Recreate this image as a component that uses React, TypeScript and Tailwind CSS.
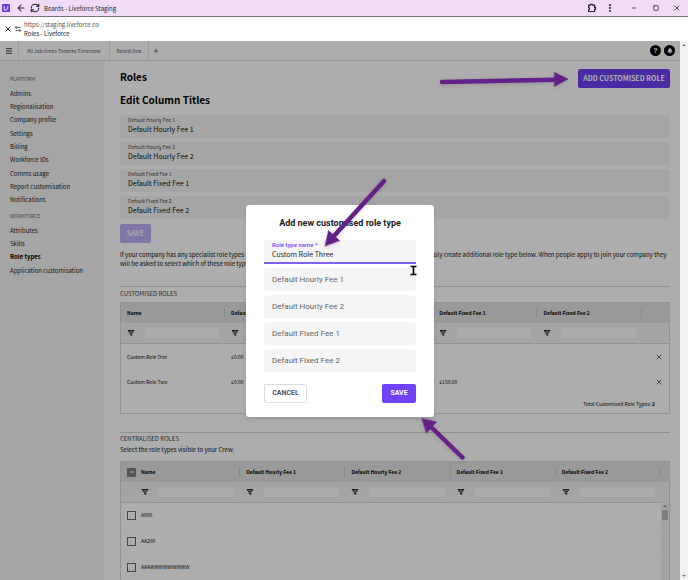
import { ArrowLeft, Bell, EllipsisVertical, Menu, Minus, Plus, RefreshCw, Square, X } from "lucide-react"
import clsx from "clsx"

const fees = ["Default Hourly Fee 1", "Default Hourly Fee 2", "Default Fixed Fee 1", "Default Fixed Fee 2"]

const menu = [
  {
    title: "PLATFORM",
    items: ["Admins", "Regionalisation", "Company profile", "Settings", "Billing", "Workforce IDs", "Comms usage", "Report customisation", "Notifications"],
  },
  { title: "WORKFORCE", items: ["Attributes", "Skills", "Role types", "Application customisation"] },
]

const customRoles = [
  { name: "Custom Role One", values: ["£0.00", "", "", ""] },
  { name: "Custom Role Two", values: ["£0.00", "", "£150.00", ""] },
]

const centralRoles = ["A000", "AA200", "AAAWWWWWWWWW"]

const FilterIcon = () => (
  <svg viewBox="0 0 8 8" className="h-2 w-2 shrink-0" fill="none" stroke="#111" strokeWidth="0.9">
    <path d="M1 1.5h6L4.7 4.3v2.2L3.3 5.6V4.3z" />
    <path d="M2.4 3h3.2" />
  </svg>
)

const FilterCell = ({ label }: { label: string }) => (
  <div className="flex items-center gap-2.5">
    <FilterIcon />
    <input aria-label={`Filter ${label}`} className="mr-1.5 h-2.5 w-full min-w-0 bg-[#fdfdfd]" />
  </div>
)

const TitleBar = () => (
  <header className="flex h-[17px] shrink-0 items-center border-b border-[#77707c] bg-[#eedcf9] pl-0.5 pr-[7px] text-[#222]">
    <svg viewBox="0 0 8 8" className="h-2 w-2">
      <rect width="8" height="8" rx="1" fill="#5f35e8" />
      <path d="M2.2 1.8v4.3h2.3M5.8 1.8v2.6M4.3 5h2" stroke="#fff" strokeWidth="0.9" fill="none" />
    </svg>
    <button aria-label="Back" className="ml-1.5"><ArrowLeft className="h-2.5 w-2.5" strokeWidth={2.5} /></button>
    <button aria-label="Reload" className="ml-1"><RefreshCw className="h-2.5 w-2.5" strokeWidth={2.5} /></button>
    <span className="ml-1 text-[6px] text-[#222]">Boards - Liveforce Staging</span>
    <div className="ml-auto flex items-center">
      <button aria-label="Extensions">
        <svg viewBox="0 0 10 10" className="h-2.5 w-2.5" fill="none" stroke="#222" strokeWidth="1.2" strokeLinejoin="round">
          <path d="M1.6 2.2h2V1.3h2v.9h2v2.2h1v1.8h-1v2.3h-6V6.600c1.200-.2 1.200-2 0-2.200z" />
        </svg>
      </button>
      <button aria-label="More" className="ml-2"><EllipsisVertical className="h-2.5 w-2.5" strokeWidth={3} /></button>
      <button aria-label="Minimise" className="ml-4"><Minus className="h-1.5 w-1.5" strokeWidth={3} /></button>
      <button aria-label="Maximise" className="ml-4"><Square className="h-1.5 w-1.5" strokeWidth={3} /></button>
      <button aria-label="Close" className="ml-3.5"><X className="h-2 w-2" strokeWidth={2.5} /></button>
    </div>
  </header>
)

const AddressBar = () => (
  <div className="flex h-6 shrink-0 items-center bg-white pl-1 text-[6px] leading-[9px]">
    <button aria-label="Close page"><X className="h-2 w-2" strokeWidth={2.5} /></button>
    <svg viewBox="0 0 8 8" className="ml-0.5 h-2 w-2" fill="none" stroke="#333" strokeWidth="0.8">
      <path d="M1 2.500h1.500M4 2.500h2.500M1.500 5.500h2.500M5.500 5.500H7" />
      <circle cx="2.500" cy="2.500" r="0.800" />
      <circle cx="5.500" cy="5.500" r="0.800" />
    </svg>
    <div className="ml-0.5">
      <p className="text-[#555]">https://staging.liveforce.co</p>
      <p className="text-[#222]">Roles - Liveforce</p>
    </div>
  </div>
)

const TabBar = () => (
  <nav className="flex h-5 shrink-0 items-center border-b border-[#dcdcdc] pr-[5px] text-[5px] text-[#555]">
    <button aria-label="Menu" className="flex h-full w-[19px] items-center justify-center border-r border-[#e8e8e8] text-[#222]">
      <Menu className="h-2 w-2" strokeWidth={2.5} />
    </button>
    <a href="#" className="flex h-full items-center border-r border-[#e8e8e8] px-2">All Job times Toronto Timezone</a>
    <a href="#" className="flex h-full items-center border-r border-[#e8e8e8] px-[7px]">Board One</a>
    <button aria-label="Add board" className="ml-1"><Plus className="h-1.5 w-1.5" strokeWidth={3} /></button>
    <button aria-label="Help" className="ml-auto h-[11px] w-[11px] rounded-full bg-black font-['Roboto',sans-serif] text-[8px] font-bold leading-[11px] text-white">?</button>
    <button aria-label="Notifications" className="ml-[3px] flex h-[11px] w-[11px] items-center justify-center rounded-full bg-black">
      <Bell className="h-1.5 w-1.5 fill-white text-white" />
    </button>
  </nav>
)

const Sidebar = () => (
  <aside className="w-[104px] shrink-0 bg-[#f4f4f4] pl-2.5 pt-3">
    {menu.map(({ title, items }) => (
      <div key={title} className="mb-1">
        <h3 className="h-3.5 text-[5px] leading-[12px] text-[#666]">{title}</h3>
        <ul className="text-[6px] text-[#1c1c1c]">
          {items.map(item => (
            <li key={item} className="mt-px h-[13px] leading-[13px] first:mt-0 nth-[3n]:mt-0 nth-[3n+2]:mt-0">
              <a href="#" className={clsx(item === "Role types" && "font-bold text-black")}>{item}</a>
            </li>
          ))}
        </ul>
      </div>
    ))}
  </aside>
)

const ColumnTitles = () => (
  <form className="mt-[7px]">
    <div className="flex flex-col gap-1">
      {fees.map(fee => (
        <label key={fee} className="flex h-[23px] flex-col rounded-t-sm bg-[#f4f4f4] pl-2 pt-px">
          <span className="text-[5px] leading-[8px] text-[#444]">{fee}</span>
          <input defaultValue={fee} className="h-[10px] w-full text-[7px] leading-[10px] text-[#111]" />
        </label>
      ))}
    </div>
    <button type="button" className="mt-[5px] block h-[19px] w-[31px] rounded-xs bg-[#bfaef5] text-[7px] font-bold text-white/80">SAVE</button>
  </form>
)

const CustomisedRoles = () => (
  <section className="mt-[18px] border-t border-[#d4d4d4]">
    <h3 className="mb-[3px] mt-0.5 text-[6px] leading-[10px] text-[#444]">CUSTOMISED ROLES</h3>
    <div className="h-28 border border-[#d8d8d8]">
      <table className="w-full table-fixed text-left text-[5px]">
        <colgroup>
          {["Name", ...fees].map(c => <col key={c} className="w-[19%]" />)}
          <col className="w-[5%]" />
        </colgroup>
        <thead>
          <tr className="h-5 bg-[#e2e2e2]">
            {["Name", ...fees].map(c => (
              <th key={c} className="p-0 pl-1.5"><div className="h-2.5 border-r border-[#ccc] leading-[10px]">{c}</div></th>
            ))}
            <th aria-label="Remove" />
          </tr>
          <tr className="h-5 border-b border-[#d8d8d8] bg-[#f2f2f2]">
            {["Name", ...fees].map(c => <td key={c} className="p-0 pl-1.5"><FilterCell label={c} /></td>)}
            <td />
          </tr>
        </thead>
        <tbody>
          {customRoles.map(({ name, values }) => (
            <tr key={name} className="h-[26px] text-[#111]">
              <td className="p-0 pl-1.5">{name}</td>
              {values.map((value, i) => <td key={i} className="p-0 pl-1.5">{value}</td>)}
              <td className="p-0 pr-1.5 text-right">
                <button aria-label={`Remove ${name}`} className="align-middle"><X className="h-2 w-2" /></button>
              </td>
            </tr>
          ))}
        </tbody>
      </table>
      <p className="mr-3.5 mt-1 text-right text-[5px] leading-[10px] text-[#111]">Total Customised Role Types: <b className="text-black">2</b></p>
    </div>
  </section>
)

const CentralisedRoles = () => (
  <section className="mt-[18px] border-t border-[#d4d4d4]">
    <h3 className="mt-px text-[6px] leading-[10px] text-[#444]">CENTRALISED ROLES</h3>
    <p className="mt-px text-[6px] leading-[10px] text-[#111]">Select the role types visible to your Crew.</p>
    <div className="relative mt-1.5 border border-[#d8d8d8]">
      <table className="w-full table-fixed text-left text-[5px]">
        <colgroup>
          <col />
          {fees.map(c => <col key={c} className="w-[19.2%]" />)}
          <col className="w-2" />
        </colgroup>
        <thead>
          <tr className="h-5 bg-[#e2e2e2]">
            <th className="p-0 pl-1.5">
              <div className="flex h-2.5 items-center border-r border-[#ccc]">
                <button aria-label="Toggle all roles" className="mr-[5px] flex h-[9px] w-[9px] items-center justify-center rounded-[1px] bg-[#7c7c7c]">
                  <Minus className="h-1.5 w-1.5 text-white" strokeWidth={4} />
                </button>
                Name
              </div>
            </th>
            {fees.map(c => (
              <th key={c} className="p-0 pl-1.5"><div className="h-2.5 border-r border-[#ccc] leading-[10px]">{c}</div></th>
            ))}
            <th aria-label="Scroll" />
          </tr>
          <tr className="h-5 border-b border-[#d8d8d8] bg-[#f2f2f2]">
            <td className="p-0 pl-5"><FilterCell label="role name" /></td>
            {fees.map(c => <td key={c} className="p-0 pl-1.5"><FilterCell label={`role ${c}`} /></td>)}
            <td />
          </tr>
        </thead>
        <tbody>
          {centralRoles.map(role => (
            <tr key={role} className="h-[26px] border-b border-[#fafafa] text-[#111]">
              <td colSpan={6} className="p-0 pl-1.5">
                <label className="flex items-center gap-[5px]">
                  <input type="checkbox" className="h-[9px] w-[9px] appearance-none border border-[#666]" />
                  {role}
                </label>
              </td>
            </tr>
          ))}
          <tr className="h-[26px]"><td colSpan={6} /></tr>
        </tbody>
      </table>
      <div className="absolute bottom-0 right-0 top-10 flex w-2 flex-col items-center bg-[#f1f1f1]">
        <span className="my-[3px] border-x-2 border-b-2 border-x-transparent border-b-[#888]" />
        <span className="h-2.5 w-1.5 bg-[#bcbcbc]" />
      </div>
    </div>
  </section>
)

const RoleModal = () => (
  <div className="absolute inset-0 flex items-center justify-center bg-black/32 font-['Roboto',sans-serif]">
    <div role="dialog" aria-labelledby="modal-title" className="w-[188px] rounded-[3px] bg-white px-[18px] pb-3.5 pt-[11px] shadow-md">
      <h2 id="modal-title" className="text-center text-[9px] font-bold leading-[14px] text-[#222]">Add new customised role type</h2>
      <label className="mt-[10px] flex h-6 flex-col border-b-2 border-[#8060ee] bg-[#f5f5f5] pl-2 pt-px">
        <span className="text-[6px] font-medium leading-[8px] text-[#7346f3]">Role type name *</span>
        <input defaultValue="Custom Role Three" className="h-[10px] w-full font-['Noto_Sans_CJK_SC',sans-serif] text-[7px] leading-[10px] text-[#222]" />
      </label>
      {fees.map(fee => (
        <input key={fee} aria-label={fee} placeholder={fee} className="mt-1 block h-[23px] w-full rounded-t-sm bg-[#f5f5f5] pl-2 text-[8px] placeholder:text-[#666]" />
      ))}
      <div className="mt-3 flex justify-between text-[7px] font-bold">
        <button className="h-[19px] w-[43px] rounded-xs border border-[#ddd] text-[#555]">CANCEL</button>
        <button className="h-[19px] w-[34px] rounded-xs bg-[#6f42f5] text-white">SAVE</button>
      </div>
    </div>
  </div>
)

// annotation arrows and the text cursor drawn over the page
const Annotations = () => (
  <svg className="pointer-events-none absolute left-0 top-0" width="680" height="539" viewBox="0 41 680 539">
    <g fill="#66208a" stroke="#66208a" strokeLinecap="round" className="drop-shadow-sm">
      <path d="M442 82L556 79.800" strokeWidth="4.500" />
      <path d="M554.500 72.500L568 79L554.500 86.500z" strokeWidth="0.500" />
      <path d="M384 181L333 237" strokeWidth="4.500" />
      <path d="M325 246L328.500 230.500L339.500 240.500z" strokeWidth="0.500" />
      <path d="M462.500 457.500L430 426" strokeWidth="4.500" />
      <path d="M422 418.500L436.500 422L426.500 433z" strokeWidth="0.500" />
    </g>
    <path d="M410.500 266.500h6M410.500 274.500h6M413.500 266.500v8" stroke="#000" strokeWidth="1.600" fill="none" />
  </svg>
)

const App = () => {
  return (
    <div className="flex h-screen flex-col overflow-hidden bg-white font-['Noto_Sans_CJK_SC',sans-serif]">
      <TitleBar />
      <AddressBar />
      <div className="flex min-h-0 flex-1">
        <div className="relative flex min-w-0 flex-1 flex-col overflow-hidden bg-white">
          <TabBar />
          <div className="flex min-h-0 flex-1">
            <Sidebar />
            <main className="min-w-0 flex-1 pl-4 pr-2.5 pt-2">
              <div className="flex items-start justify-between">
                <h1 className="text-[10px] font-bold leading-[15px]">Roles</h1>
                <button className="h-[19px] w-[92px] rounded-xs bg-[#6c40f0] text-[7px] font-bold text-white">ADD CUSTOMISED ROLE</button>
              </div>
              <h2 className="mt-1 text-[10px] font-bold leading-[16px]">Edit Column Titles</h2>
              <ColumnTitles />
              <p className="mt-[7px] text-[6px] leading-[9px] text-[#111]">
                If your company has any specialist role types that are not included in the main list of centralised roles, you can easily create additional role type below. When people apply to join your company they will be asked to select which of these role types they can work as.
              </p>
              <CustomisedRoles />
              <CentralisedRoles />
            </main>
          </div>
          <RoleModal />
          <Annotations />
        </div>
        <div className="flex w-2 shrink-0 flex-col items-center justify-between bg-[#f1f1f1] py-[3px]">
          <span className="border-x-2 border-b-2 border-x-transparent border-b-[#777]" />
          <span className="border-x-2 border-t-2 border-x-transparent border-t-[#777]" />
        </div>
      </div>
    </div>
  )
}

export default App
